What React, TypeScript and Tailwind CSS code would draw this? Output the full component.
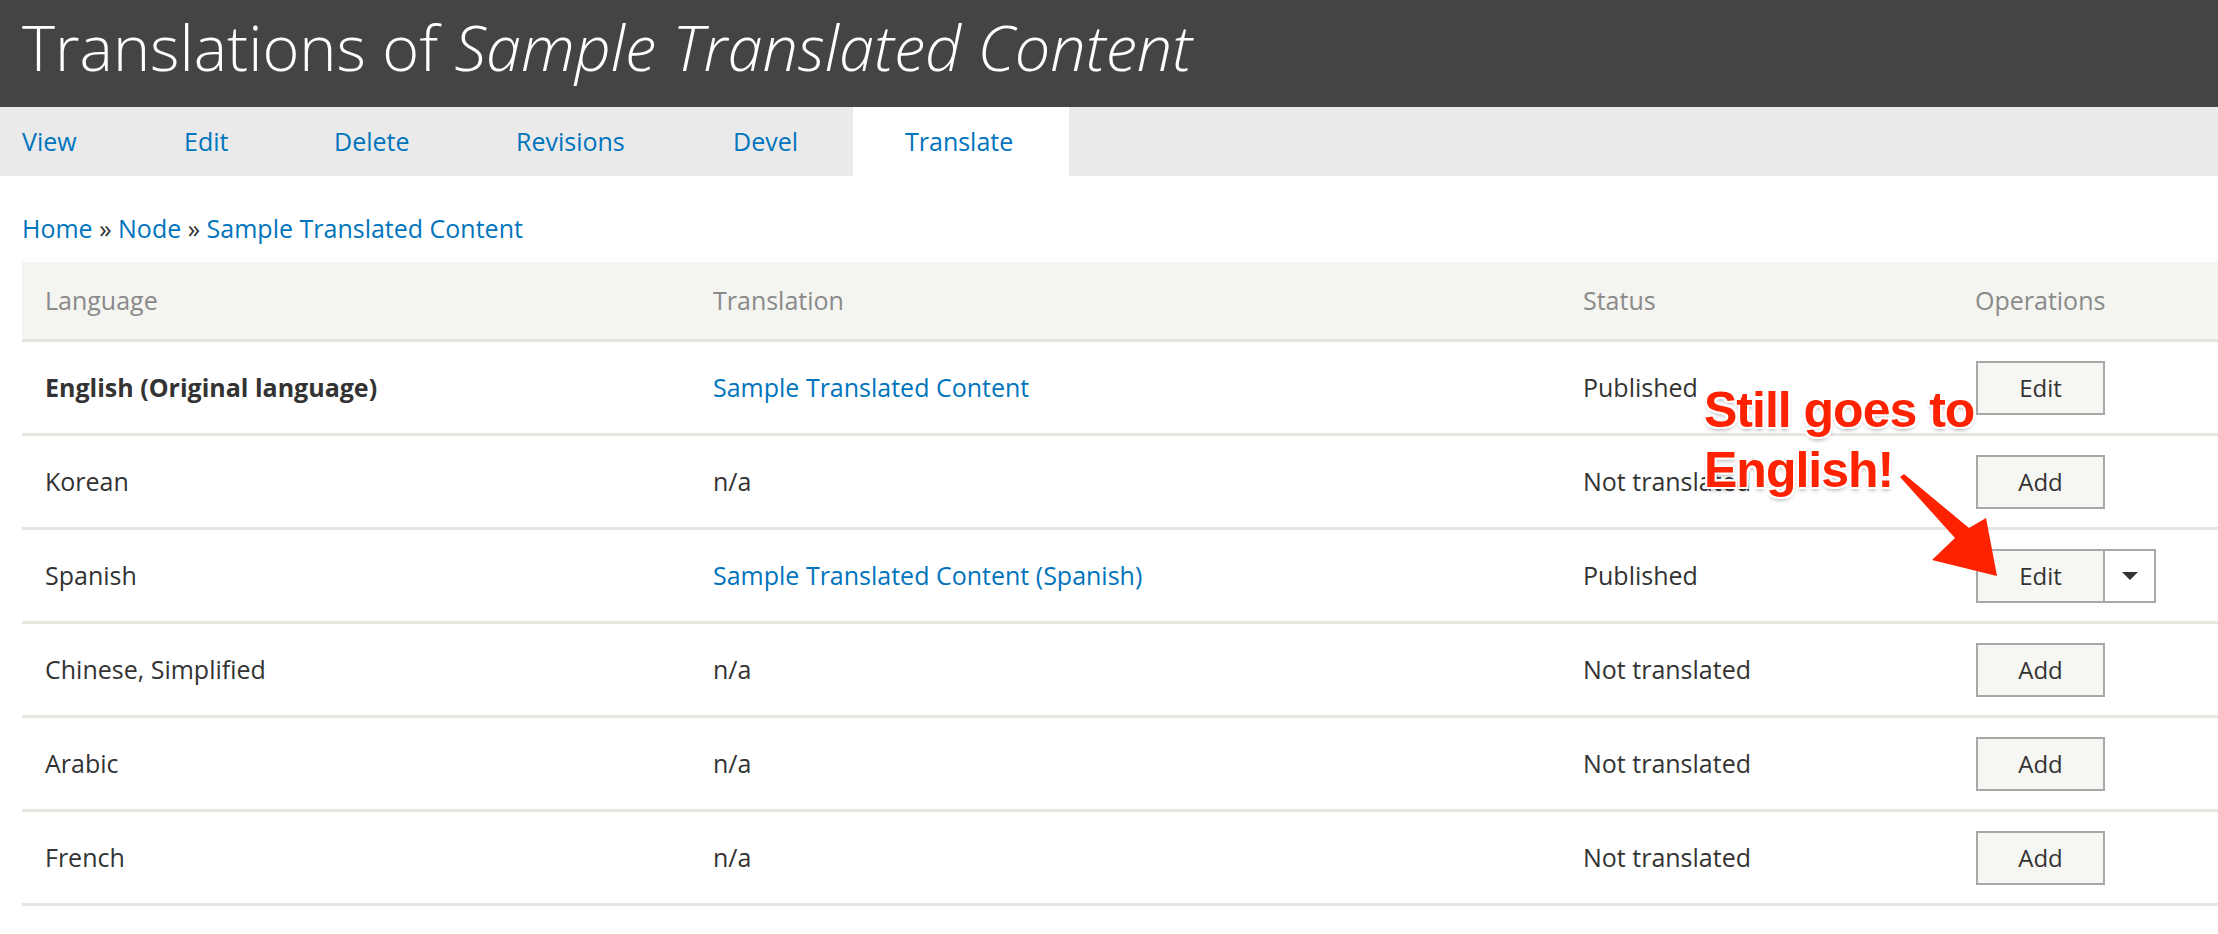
import React from "react";

const rows = [
  { lang: "English (Original language)", bold: true, tr: "Sample Translated Content", link: true, status: "Published", op: "Edit" },
  { lang: "Korean", tr: "n/a", status: "Not translated", op: "Add" },
  { lang: "Spanish", tr: "Sample Translated Content (Spanish)", link: true, status: "Published", op: "Edit", drop: true },
  { lang: "Chinese, Simplified", tr: "n/a", status: "Not translated", op: "Add" },
  { lang: "Arabic", tr: "n/a", status: "Not translated", op: "Add" },
  { lang: "French", tr: "n/a", status: "Not translated", op: "Add" },
];

export default function App() {
  return (
    <div className="relative w-[2218px] h-[934px] bg-white overflow-hidden" style={{ fontFamily: '"Open Sans", sans-serif' }}>
      <div className="h-[107px] bg-[#444444] flex items-center pl-[22px]">
        <h1 className="text-white text-[63px] font-light leading-none -mt-[14px]">
          Translations of <em>Sample Translated Content</em>
        </h1>
      </div>
      <div className="h-[69px] bg-[#eaeaea] flex items-stretch text-[25px] text-[#0074bd]">
        <div className="w-[184px] pl-[22px] flex items-center">View</div>
        <div className="w-[150px] flex items-center">Edit</div>
        <div className="w-[182px] flex items-center">Delete</div>
        <div className="w-[217px] flex items-center">Revisions</div>
        <div className="w-[120px] flex items-center">Devel</div>
        <div className="w-[216px] bg-white flex items-center pl-[52px]">Translate</div>
      </div>
      <div className="pl-[22px] pt-[34px] text-[25px] text-[#0074bd] h-[86px]">
        Home <span className="text-[#333]">»</span> Node <span className="text-[#333]">»</span> Sample Translated Content
      </div>
      <div className="ml-[22px]">
        <div className="h-[80px] bg-[#f4f4f0] border-b-[3px] border-[#e4e3de] flex items-center text-[25px] text-[#8a8a8a]">
          <div className="w-[691px] pl-[23px]">Language</div>
          <div className="w-[870px]">Translation</div>
          <div className="w-[392px]">Status</div>
          <div>Operations</div>
        </div>
        {rows.map((r) => (
          <div key={r.lang} className="h-[94px] border-b-[3px] border-[#e6e5e0] flex items-center text-[25px] text-[#333]">
            <div className={`w-[691px] pl-[23px] ${r.bold ? "font-bold" : ""}`}>{r.lang}</div>
            <div className={`w-[870px] ${r.link ? "text-[#0074bd]" : ""}`}>{r.tr}</div>
            <div className="w-[393px]">{r.status}</div>
            <div className="flex h-[54px] border-2 border-[#a8a8a8] bg-[#f3f3ee]">
              <div className="w-[125px] flex items-center justify-center text-[24px] bg-[#f6f6f2]">{r.op}</div>
              {r.drop && (
                <div className="w-[51px] border-l-2 border-[#a8a8a8] flex items-center justify-center bg-white">
                  <div className="w-0 h-0 border-l-[8px] border-r-[8px] border-t-[8px] border-l-transparent border-r-transparent border-t-[#333]" />
                </div>
              )}
            </div>
          </div>
        ))}
      </div>
      <div
        className="absolute left-[1704px] top-[380px] text-[#ff2200] font-bold text-[50px] leading-[60px]"
        style={{ fontFamily: '"Liberation Sans", Arial, sans-serif', textShadow: "2px 2px 0 #fff,-2px -2px 0 #fff,2px -2px 0 #fff,-2px 2px 0 #fff,0 3px 4px rgba(0,0,0,0.35)", letterSpacing: "-1px" }}
      >
        Still goes to
        <br />
        English!
      </div>
      <svg className="absolute left-[1890px] top-[470px]" width="120" height="120" viewBox="0 0 120 120">
        <path d="M10 7 L14 4 L79 58 L96 48 L107 106 L42 90 L65 68 Z" fill="#ff2200" />
      </svg>
    </div>
  );
}
